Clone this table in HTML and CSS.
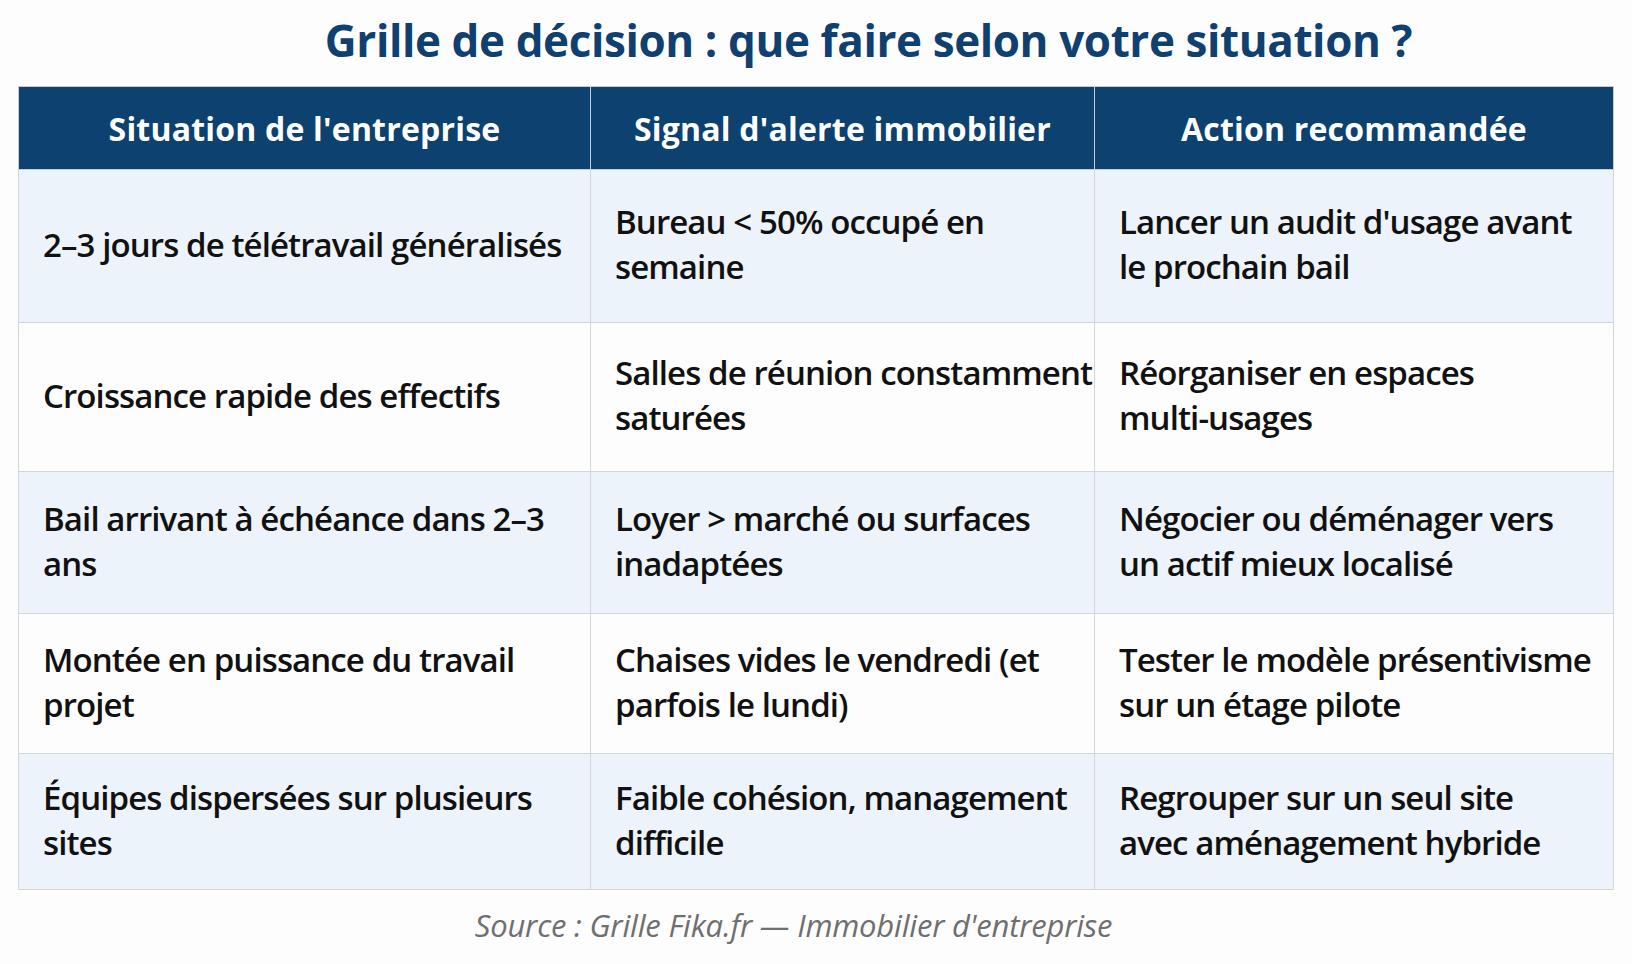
FILE: index.html
```html
<!DOCTYPE html>
<html lang="fr">
<head>
<meta charset="utf-8">
<title>Grille de décision</title>
<link rel="stylesheet" href="styles.css">
</head>
<body>
<div class="page">
  <h1 class="title">Grille de décision : que faire selon votre situation ?</h1>
  <table class="grid">
    <colgroup>
      <col class="c1"><col class="c2"><col class="c3">
    </colgroup>
    <thead>
      <tr>
        <th>Situation de l'entreprise</th>
        <th>Signal d'alerte immobilier</th>
        <th>Action recommandée</th>
      </tr>
    </thead>
    <tbody>
      <tr class="r1">
        <td>2–3 jours de télétravail généralisés</td>
        <td>Bureau &lt; 50% occupé en semaine</td>
        <td>Lancer un audit d'usage avant le prochain bail</td>
      </tr>
      <tr class="r2">
        <td>Croissance rapide des effectifs</td>
        <td><span class="nw">Salles de réunion constamment</span> saturées</td>
        <td>Réorganiser en espaces <span class="nw">multi-usages</span></td>
      </tr>
      <tr class="r3">
        <td>Bail arrivant à échéance dans 2–3 ans</td>
        <td>Loyer &gt; marché ou surfaces inadaptées</td>
        <td>Négocier ou déménager vers un actif mieux localisé</td>
      </tr>
      <tr class="r4">
        <td>Montée en puissance du travail projet</td>
        <td>Chaises vides le vendredi (et parfois le lundi)</td>
        <td>Tester le modèle présentivisme sur un étage pilote</td>
      </tr>
      <tr class="r5">
        <td>Équipes dispersées sur plusieurs sites</td>
        <td>Faible cohésion, management difficile</td>
        <td>Regrouper sur un seul site<br>avec aménagement hybride</td>
      </tr>
    </tbody>
  </table>
  <p class="source">Source : Grille Fika.fr — Immobilier d'entreprise</p>
</div>
</body>
</html>
```

FILE: styles.css
```css
html, body {
  margin: 0;
  padding: 0;
  background: #fdfdfd;
}

body {
  font-family: "Open Sans", "Noto Sans", sans-serif;
  color: #111;
}

.page {
  width: 1595px;
  margin: 0 0 0 18px;
}

.title {
  margin: 0;
  padding: 14px 0 0 106px;
  height: 72px;
  box-sizing: border-box;
  text-align: center;
  font-size: 44px;
  font-weight: 700;
  color: #0f4070;
  letter-spacing: -0.4px;
  line-height: 52px;
  white-space: nowrap;
}

.grid {
  width: 1595px;
  border-collapse: collapse;
  table-layout: fixed;
  margin-top: 14px;
}

.c1 { width: 572px; }
.c2 { width: 504px; }
.c3 { width: 519px; }

.grid th {
  background: #0d4170;
  color: #fff;
  font-size: 32px;
  font-weight: 700;
  letter-spacing: 0.2px;
  height: 82px;
  padding: 0 6px;
  border: 1px solid #c9ced6;
  text-align: center;
  vertical-align: middle;
  white-space: nowrap;
}

.grid td {
  border: 1.5px solid #d2d6dc;
  padding: 0 12px 4px 24px;
  font-size: 33px;
  font-weight: 600;
  letter-spacing: -0.9px;
  line-height: 45px;
  vertical-align: middle;
  color: #111;
}

.nw { white-space: nowrap; }

.r1, .r3, .r5 { background: #edf3fa; }
.r2, .r4 { background: #fdfdfd; }

.r1 { height: 153px; }
.r2 { height: 149px; }
.r3 { height: 142px; }
.r4 { height: 140px; }
.r5 { height: 136px; }

.source {
  margin: 14px 0 0 0;
  padding-right: 44px;
  text-align: center;
  font-size: 31px;
  font-style: italic;
  letter-spacing: -0.2px;
  color: #6f6f6f;
}
```
